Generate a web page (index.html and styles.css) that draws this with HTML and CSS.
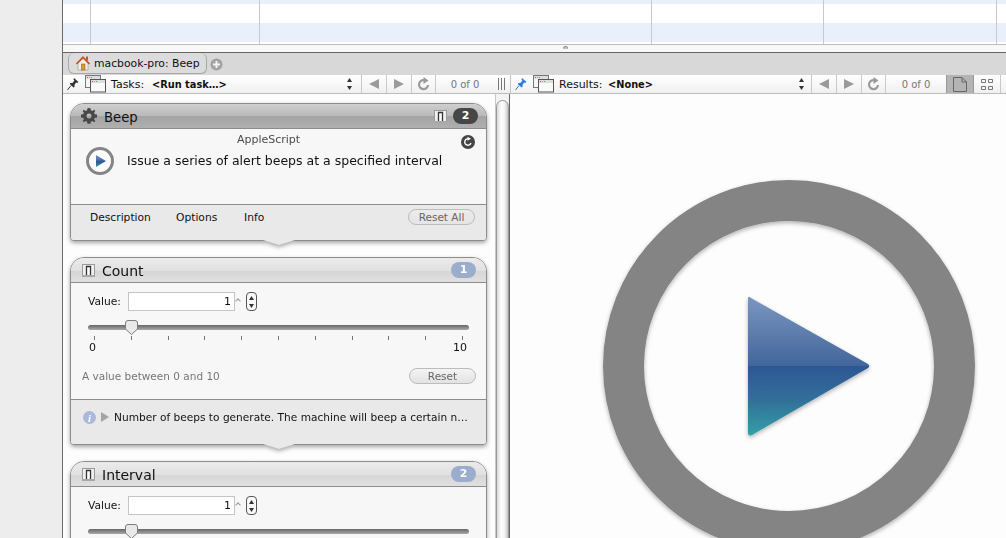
FILE: index.html
```html
<!DOCTYPE html>
<html lang="en">
<head>
<meta charset="utf-8">
<title>Beep</title>
<link rel="stylesheet" href="styles.css">
</head>
<body>
<svg class="defs" width="0" height="0" aria-hidden="true">
  <defs>
    <symbol id="windows" viewBox="0 0 21 18">
      <rect x="0.5" y="0.5" width="15" height="12" fill="#f6f6f6" stroke="#777"/>
      <rect x="1" y="1" width="14" height="3" fill="#ddd"/>
      <rect x="2" y="2" width="1" height="1" fill="#c55"/><rect x="4" y="2" width="1" height="1" fill="#ca5"/><rect x="6" y="2" width="1" height="1" fill="#5a5"/>
      <rect x="5.5" y="4.5" width="15" height="12.500" fill="#fafafa" stroke="#555"/>
      <rect x="6" y="5" width="14" height="3" fill="#ddd"/>
      <rect x="7" y="6" width="1" height="1" fill="#c55"/><rect x="9" y="6" width="1" height="1" fill="#ca5"/><rect x="11" y="6" width="1" height="1" fill="#5a5"/>
    </symbol>
    <symbol id="pin" viewBox="0 0 12 14">
      <path d="M7 1 L11.500 5 L10 6 L9 5.600 L7.500 8 L7.500 10 L6.500 10.500 L2.800 7 L3.500 6 L5.500 6 L7.400 3.600 L6.500 2.500 Z" fill="currentColor"/>
      <path d="M4 8.500 L0.500 13" stroke="currentColor" stroke-width="1" fill="none"/>
    </symbol>
    <symbol id="reload" viewBox="0 0 14 14">
      <path d="M11 8 A4.500 4.500 0 1 1 7 3.200" fill="none" stroke="currentColor" stroke-width="2.200"/>
      <path d="M6.500 0 L11.500 3.500 L6.500 7 Z" fill="currentColor"/>
    </symbol>
    <symbol id="tile" viewBox="0 0 13 13">
      <rect x="0.500" y="0.500" width="12" height="12" fill="#efefef" stroke="#9a9a9a"/>
      <rect x="0" y="11" width="13" height="2" fill="#a8a8a8"/>
      <path d="M4.500 11 V2.500 H8.500 V11" fill="#fff" stroke="#333" stroke-width="1.300"/>
    </symbol>
    <symbol id="updown" viewBox="0 0 7 14">
      <path d="M3.500 1 L6 5 H1 Z M3.500 13 L6 9 H1 Z" fill="#333"/>
    </symbol>
    <linearGradient id="playfill" x1="0" y1="0" x2="0" y2="1">
      <stop offset="0" stop-color="#7b97c0"/>
      <stop offset="0.5" stop-color="#42659c"/>
      <stop offset="0.5" stop-color="#2f5794"/>
      <stop offset="0.75" stop-color="#30709a"/>
      <stop offset="1" stop-color="#34a0a6"/>
    </linearGradient>
  </defs>
</svg>

<aside class="sidebar"></aside>

<main class="main">
  <section class="table">
    <div class="row row-cut"><i></i><i></i><i></i><i></i><i></i><i></i></div>
    <div class="row row-white"><i></i><i></i><i></i><i></i><i></i><i></i></div>
    <div class="row row-blue"><i></i><i></i><i></i><i></i><i></i><i></i></div>
    <div class="row row-end"><i></i><i></i><i></i><i></i><i></i><i></i></div>
  </section>
  <div class="splitter"><span class="dimple"></span></div>

  <nav class="tabs">
    <div class="tab">
      <svg class="house" width="16" height="16" viewBox="0 0 16 16">
        <path d="M3 8 V15 H13 V8 L8 3 Z" fill="#f3efe6" stroke="#998" stroke-width="0.600"/>
        <path d="M0.800 8.500 L8 1 L15.200 8.500 L13.800 9.500 L8 3.800 L2.200 9.500 Z" fill="#c8552a"/>
        <rect x="11" y="1.500" width="2" height="4" fill="#c8552a"/>
        <rect x="6.500" y="9" width="3.500" height="6" fill="#d79a2b" stroke="#8a5a12" stroke-width="0.500"/>
      </svg>
      <span>macbook-pro: Beep</span>
    </div>
    <svg class="add" width="13" height="13" viewBox="0 0 13 13">
      <circle cx="6.500" cy="6.500" r="6" fill="#a2a2a2"/>
      <path d="M6.500 3 V10 M3 6.500 H10" stroke="#f2f2f2" stroke-width="2"/>
    </svg>
  </nav>

  <div class="toolbar">
    <div class="bar bar-left">
      <svg class="pin pin-dark" width="12" height="14"><use href="#pin"/></svg>
      <svg class="win" width="21" height="18"><use href="#windows"/></svg>
      <span class="bar-label">Tasks:</span>
      <span class="bar-value bar-value-tasks">&lt;Run task…&gt;</span>
      <svg class="updown" width="7" height="14"><use href="#updown"/></svg>
      <div class="btn"><svg width="12" height="12" viewBox="0 0 12 12"><path d="M11 1 V11 L1 6 Z" fill="#9a9a9a"/></svg></div>
      <div class="btn"><svg width="12" height="12" viewBox="0 0 12 12"><path d="M1 1 V11 L11 6 Z" fill="#9a9a9a"/></svg></div>
      <div class="btn btn-reload"><svg width="14" height="14"><use href="#reload"/></svg></div>
      <div class="count count-left">0 of 0</div>
      <div class="grip"><i></i><i></i><i></i></div>
    </div>
    <div class="bar bar-right">
      <svg class="pin pin-blue" width="12" height="14"><use href="#pin"/></svg>
      <svg class="win" width="21" height="18"><use href="#windows"/></svg>
      <span class="bar-label">Results:</span>
      <span class="bar-value bar-value-results">&lt;None&gt;</span>
      <svg class="updown" width="7" height="14"><use href="#updown"/></svg>
      <div class="btn"><svg width="12" height="12" viewBox="0 0 12 12"><path d="M11 1 V11 L1 6 Z" fill="#9a9a9a"/></svg></div>
      <div class="btn"><svg width="12" height="12" viewBox="0 0 12 12"><path d="M1 1 V11 L11 6 Z" fill="#9a9a9a"/></svg></div>
      <div class="btn btn-reload"><svg width="14" height="14"><use href="#reload"/></svg></div>
      <div class="count count-right">0 of 0</div>
      <div class="view view-on"><svg width="14" height="15" viewBox="0 0 14 15"><path d="M0.500 0.500 H9 L13.500 5 V14.500 H0.500 Z M9 0.500 V5 H13.500" fill="none" stroke="#666"/></svg></div>
      <div class="view view-grid"><svg width="12" height="11" viewBox="0 0 12 11"><path d="M0.500 0.500 H4.500 V3.500 H0.500 Z M7.500 0.500 H11.500 V3.500 H7.500 Z M0.500 7.500 H4.500 V10.500 H0.500 Z M7.500 7.500 H11.500 V10.500 H7.500 Z" fill="none" stroke="#777"/></svg></div>
    </div>
  </div>

  <div class="panes">
    <section class="pane-left">
      <div class="cards">
        <article class="card card-main">
          <header class="card-head head-dark">
            <svg class="gear" width="16" height="16" viewBox="0 0 16 16">
              <path d="M8 0 L9.500 0.200 L9.900 2.300 L11.400 3 L13.200 1.800 L14.300 2.900 L13.100 4.700 L13.800 6.200 L16 6.600 V9.400 L13.800 9.800 L13.100 11.300 L14.300 13.100 L13.200 14.200 L11.400 13 L9.900 13.700 L9.500 15.800 H6.500 L6.100 13.700 L4.600 13 L2.800 14.200 L1.700 13.100 L2.900 11.300 L2.200 9.800 L0 9.400 V6.600 L2.200 6.200 L2.900 4.700 L1.700 2.900 L2.800 1.800 L4.600 3 L6.100 2.300 L6.500 0.200 Z M8 5.500 A2.500 2.500 0 1 0 8 10.500 A2.500 2.500 0 1 0 8 5.500 Z" fill="#484848" fill-rule="evenodd"/>
            </svg>
            <h2 class="title title-main">Beep</h2>
            <svg class="tile" width="13" height="13"><use href="#tile"/></svg>
            <span class="badge badge-dark">2</span>
          </header>
          <div class="summary">
            <p class="kind">AppleScript</p>
            <svg class="mini-reload" width="14" height="14" viewBox="0 0 14 14">
              <circle cx="7" cy="7" r="7" fill="#454545"/>
              <path d="M10 8 A3.200 3.200 0 1 1 7 3.800" fill="none" stroke="#fff" stroke-width="1.300"/>
              <path d="M6.500 1.800 L10 3.800 L6.500 5.800 Z" fill="#fff"/>
            </svg>
            <div class="lead">
              <svg width="28" height="28" viewBox="0 0 28 28">
                <circle cx="14" cy="14" r="12.500" fill="#fbfbfb" stroke="#858585" stroke-width="3"/>
                <path d="M10 8 L20 14 L10 20 Z" fill="url(#playfill)"/>
              </svg>
              <p class="desc">Issue a series of alert beeps at a specified interval</p>
            </div>
          </div>
          <footer class="card-foot foot-tabs">
            <span class="foot-tab foot-tab-desc">Description</span>
            <span class="foot-tab foot-tab-opts">Options</span>
            <span class="foot-tab">Info</span>
            <button class="pill pill-all">Reset All</button>
          </footer>
        </article>

        <article class="card">
          <header class="card-head head-light">
            <svg class="tile" width="13" height="13"><use href="#tile"/></svg>
            <h2 class="title">Count</h2>
            <span class="badge badge-blue">1</span>
          </header>
          <div class="option">
            <div class="value-row">
              <label class="value-label">Value:</label>
              <div class="field">1</div>
              <span class="field-mark"></span>
              <div class="stepper"><svg width="7" height="14"><use href="#updown"/></svg></div>
            </div>
            <div class="slider">
              <svg class="thumb" width="13" height="15" viewBox="0 0 13 15"><path d="M0.500 3 Q0.500 0.500 3 0.500 H10 Q12.500 0.500 12.500 3 V9 L6.500 14.500 L0.500 9 Z" fill="#e9e9e9" stroke="#7c7c7c"/></svg>
            </div>
            <div class="ticks"><i></i><i></i><i></i><i></i><i></i><i></i><i></i><i></i><i></i><i></i><i></i></div>
            <div class="scale"><span>0</span><span>10</span></div>
            <div class="hint-row">
              <span class="hint">A value between 0 and 10</span>
              <button class="pill pill-reset">Reset</button>
            </div>
          </div>
          <footer class="card-foot foot-info">
            <svg width="13" height="13" viewBox="0 0 13 13"><circle cx="6.500" cy="6.500" r="6.500" fill="#aab8de"/><text class="info-i" x="6.500" y="10.500" text-anchor="middle">i</text></svg>
            <svg width="8" height="10" viewBox="0 0 8 10"><path d="M0 0 L8 5 L0 10 Z" fill="#a4a4a4"/></svg>
            <p class="info-text">Number of beeps to generate. The machine will beep a certain n…</p>
          </footer>
        </article>

        <article class="card">
          <header class="card-head head-light">
            <svg class="tile" width="13" height="13"><use href="#tile"/></svg>
            <h2 class="title">Interval</h2>
            <span class="badge badge-blue">2</span>
          </header>
          <div class="option">
            <div class="value-row">
              <label class="value-label">Value:</label>
              <div class="field">1</div>
              <span class="field-mark"></span>
              <div class="stepper"><svg width="7" height="14"><use href="#updown"/></svg></div>
            </div>
            <div class="slider">
              <svg class="thumb" width="13" height="15" viewBox="0 0 13 15"><path d="M0.500 3 Q0.500 0.500 3 0.500 H10 Q12.500 0.500 12.500 3 V9 L6.500 14.500 L0.500 9 Z" fill="#e9e9e9" stroke="#7c7c7c"/></svg>
            </div>
          </div>
        </article>
      </div>
      <div class="scroller"><span class="scroll-thumb"></span></div>
    </section>

    <section class="pane-right">
      <svg class="big-play" width="380" height="380" viewBox="0 0 380 380">
        <defs>
          <filter id="soft" x="-10%" y="-10%" width="120%" height="120%">
            <feDropShadow dx="0" dy="2" stdDeviation="2" flood-color="#000" flood-opacity="0.3"/>
          </filter>
        </defs>
        <circle cx="186" cy="186" r="165.500" fill="none" stroke="#848484" stroke-width="41" filter="url(#soft)"/>
        <path d="M148 118 Q145 115 145 119 V252 Q145 257 149 255 L265 188 Q267.500 186 265 184 Z" fill="url(#playfill)" filter="url(#soft)"/>
      </svg>
    </section>
  </div>
</main>
</body>
</html>
```
FILE: styles.css
```css
* { box-sizing: border-box; }
html, body { margin: 0; padding: 0; }
body {
  width: 1006px;
  height: 538px;
  overflow: hidden;
  display: flex;
  background: #fdfdfd;
  font-family: "DejaVu Sans", sans-serif;
  font-size: 10.700px;
  color: #111;
}
.defs { position: absolute; }
.sidebar { width: 62px; flex: none; background: #ededed; }
.main {
  width: 944px;
  height: 538px;
  flex: none;
  display: flex;
  flex-direction: column;
  border-left: 1px solid #6a6a6a;
  overflow: hidden;
}

/* top table */
.table { flex: none; height: 44px; display: flex; flex-direction: column; }
.row { display: grid; grid-template-columns: 28px 169px 392px 172px 173px 1fr; }
.row i { border-right: 1px solid #c9c9c9; }
.row i:last-child { border-right: 0; }
.row-cut { height: 4px; background: #e9f0fb; }
.row-white { height: 19px; background: #fff; }
.row-blue { height: 19px; background: #e9f0fb; }
.row-end { height: 2px; background: #fff; }
.splitter {
  flex: none;
  height: 9px;
  background: #f8f8f8;
  border-top: 1px solid #bdbdbd;
  border-bottom: 1px solid #666;
  display: flex;
  justify-content: flex-start;
  padding: 1px 0 0 500px;
}
.dimple { width: 5px; height: 3px; border-radius: 3px 3px 0 0; background: #c4c4c4; box-shadow: inset 0 1px 0 #888; }

/* tabs */
.tabs { flex: none; height: 22px; background: #d8d8d8; display: flex; align-items: flex-start; padding-left: 5px; }
.tab {
  width: 139px;
  height: 21px;
  display: flex;
  align-items: center;
  gap: 3px;
  padding-left: 6px;
  background: #dcdcdc;
  border: 1px solid #a8a8a8;
  border-top: 0;
  border-radius: 6px;
  font-size: 10.800px;
}
.house { flex: none; }
.add { margin: 5px 0 0 3px; }

/* toolbar */
.toolbar {
  flex: none;
  height: 19px;
  display: flex;
  border-bottom: 1px solid #bcbcbc;
  background: linear-gradient(#ffffff, #f0f0f0);
}
.bar { display: flex; align-items: center; height: 18px; }
.bar-left { width: 448px; border-right: 1px solid #c6c6c6; padding-left: 4px; }
.bar-right { flex: 1; padding-left: 4px; }
.pin { flex: none; }
.pin-dark { color: #333; }
.pin-blue { color: #2a7ae0; }
.win { flex: none; margin-left: 6px; }
.bar-label { margin-left: 5px; padding-top: 1px; font-size: 11px; }
.bar-left .bar-label { width: 41px; }
.bar-right .bar-label { width: 49px; }
.bar-value { padding-top: 1px; font-weight: 700; font-size: 9.800px; white-space: nowrap; }
.bar-value-tasks { width: 194px; }
.bar-value-results { width: 190px; }
.updown { flex: none; }
.bar-left .updown { margin-right: 8px; }
.bar-right .updown { margin-right: 6px; }
.btn {
  width: 25px;
  height: 18px;
  flex: none;
  display: flex;
  align-items: center;
  justify-content: center;
  border-left: 1px solid #c9c9c9;
}
.btn-reload { color: #9a9a9a; border-right: 1px solid #c9c9c9; }
.count { padding-top: 1px; color: #777; font-size: 10px; text-align: center; flex: none; }
.count-left { width: 58px; }
.count-right { width: 60px; }
.grip { display: flex; gap: 2px; margin-left: 4px; height: 12px; }
.grip i { width: 1px; background: #777; }
.view { height: 18px; flex: none; display: flex; align-items: center; justify-content: center; }
.view-on { width: 28px; background: #b4b4b4; border: 1px solid #999; border-width: 0 1px; }
.view-grid { width: 27px; border-right: 1px solid #c9c9c9; }

/* panes */
.panes { flex: 1; min-height: 0; display: flex; }
.pane-left {
  width: 447px;
  flex: none;
  display: flex;
  padding: 0 0 0 7px;
  background: #fdfdfd;
  overflow: hidden;
}
.cards { width: 417px; flex: none; display: flex; flex-direction: column; gap: 16px; padding-top: 9px; }
.card {
  flex: none;
  position: relative;
  border: 1px solid #8c8c8c;
  border-radius: 14px 14px 4px 4px;
  background: #f7f7f7;
  filter: drop-shadow(0 2px 2px rgba(0, 0, 0, .35));
}
.card:not(:last-child)::after {
  content: "";
  position: absolute;
  left: 192px;
  bottom: -5px;
  width: 32px;
  height: 5px;
  background: #e9e9e9;
  clip-path: polygon(0 0, 100% 0, 50% 100%);
}
.card-head {
  height: 25px;
  display: flex;
  align-items: center;
  border-bottom: 1px solid #8c8c8c;
  border-radius: 13px 13px 0 0;
}
.head-dark {
  padding: 0 8px 0 10px;
  background: linear-gradient(#cfcfcf 0, #b9b9b9 50%, #a4a4a4 50%, #afafaf 100%);
}
.head-light {
  padding: 0 10px 0 11px;
  background: linear-gradient(#ebebeb 0, #e0e0e0 55%, #d6d6d6 55%, #e0e0e0 100%);
}
.gear { flex: none; }
.title { margin: 0 0 0 6px; padding-top: 1px; font-size: 14px; font-weight: 400; flex: 1; color: #111; }
.title-main { margin-left: 7px; font-size: 13.200px; padding-top: 2px; }
.head-light .title { margin-left: 7px; }
.tile { flex: none; }
.badge {
  width: 25px;
  height: 16px;
  border-radius: 8px;
  color: #fff;
  font-weight: 700;
  font-size: 11px;
  text-align: center;
  line-height: 16px;
  flex: none;
}
.badge-dark { background: #464646; margin-left: 6px; }
.badge-blue { background: #9aadcc; }

/* main card body */
.summary { height: 75px; position: relative; padding-top: 4px; }
.kind { margin: 0; padding-right: 20px; text-align: center; color: #4c4c4c; font-size: 11px; line-height: 14px; }
.mini-reload { position: absolute; right: 11px; top: 6px; }
.lead { display: flex; align-items: center; gap: 13px; padding-left: 15px; margin-top: 0; }
.desc { margin: 0 0 2px; font-size: 12.500px; color: #111; }
.card-foot { background: #e9e9e9; border-top: 1px solid #8c8c8c; border-radius: 0 0 3px 3px; }
.foot-tabs { height: 36px; display: flex; align-items: flex-start; padding: 4px 11px 0 19px; }
.foot-tab { padding-top: 1px; line-height: 16px; }
.foot-tab-desc { width: 86px; }
.foot-tab-opts { width: 68px; }
.pill {
  height: 16px;
  width: 67px;
  margin-left: auto;
  padding: 0;
  border: 1px solid #bcbcbc;
  border-radius: 8px;
  background: linear-gradient(#f4f4f4, #e2e2e2);
  color: #666;
  font-family: "DejaVu Sans", sans-serif;
  font-size: 10.500px;
  line-height: 14px;
  text-align: center;
}
.pill-all { background: linear-gradient(#ececec, #e4e4e4); }

/* option card body */
.option { padding: 9px 10px 0 11px; height: 116px; }
.value-row { display: flex; align-items: center; height: 19px; padding-left: 6px; }
.value-label { width: 40px; font-size: 10.700px; }
.field {
  width: 107px;
  height: 19px;
  border: 1px solid #c4c4c4;
  background: #fff;
  text-align: right;
  padding-right: 3px;
  line-height: 18px;
  font-size: 11px;
}
.field-mark { width: 10px; height: 4px; margin-bottom: 2px; margin-left: 1px; flex: none; }
.field-mark::before { content: ""; display: block; width: 3px; height: 3px; border-top: 1px solid #999; border-left: 1px solid #999; transform: rotate(45deg); }
.stepper {
  width: 11px;
  height: 19px;
  border: 1px solid #555;
  border-radius: 4px;
  background: #f8f8f8;
  display: flex;
  align-items: center;
  justify-content: center;
}
.slider {
  position: relative;
  margin: 14px 0 0 6px;
  width: 381px;
  height: 5px;
  border-radius: 3px;
  background: linear-gradient(#666, #aaa);
}
.thumb {
  position: absolute;
  left: 37px;
  top: -5px;
}
.ticks { display: flex; justify-content: space-between; width: 369px; margin: 6px 0 0 12px; height: 4px; }
.ticks i { width: 1px; background: #777; }
.scale { display: flex; justify-content: space-between; width: 378px; margin: 1px 0 0 7px; line-height: 14px; font-size: 11px; }
.hint-row { display: flex; align-items: center; justify-content: space-between; margin-top: 13px; height: 16px; width: 394px; }
.hint { color: #777; font-size: 10.500px; }
.foot-info { height: 45px; display: flex; align-items: center; gap: 5px; padding: 0 0 10px 12px; }
.info-i { font-family: "Liberation Serif", serif; font-style: italic; font-weight: 700; font-size: 11px; fill: #fff; }
.info-text { margin: 0; font-size: 10.600px; white-space: nowrap; }

/* scroller */
.scroller {
  position: relative;
  width: 15px;
  margin-left: 8px;
  border-left: 1px solid #c9c9c9;
  border-right: 1px solid #666;
  background: #f3f3f3;
}
.scroll-thumb {
  display: block;
  margin-top: 6px;
  height: 500px;
  width: 13px;
  border: 1px solid #999;
  border-top-left-radius: 7px;
  border-top-right-radius: 7px;
  background: linear-gradient(90deg, #d9d9d9, #ffffff 40%, #f3f3f3 70%, #c4c4c4);
}

/* results */
.pane-right { flex: 1; min-width: 0; overflow: hidden; padding: 86px 0 0 93px; background: #fdfdfd; }
.big-play { display: block; overflow: visible; }
```
